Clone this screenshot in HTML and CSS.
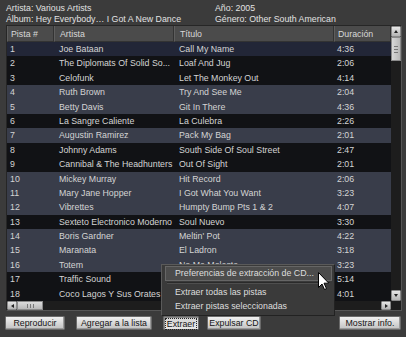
FILE: index.html
```html
<!DOCTYPE html>
<html lang="es">

<head>
    <meta charset="UTF-8">
    <title>Pistas del CD</title>
    <link rel="stylesheet" href="styles.css">
</head>

<body>
    <div class="window">
        <div class="info">
            <div>Artista: Various Artists</div>
            <div>Año: 2005</div>
            <div>Álbum: Hey Everybody… I Got A New Dance</div>
            <div>Género: Other South American</div>
        </div>

        <div class="list">
            <div class="table">
                <div class="row head">
                    <span>Pista #</span><span>Artista</span><span>Título</span><span>Duración</span>
                </div>
                <div class="row focus"><span>1</span><span>Joe Bataan</span><span>Call My Name</span><span>4:36</span></div>
                <div class="row"><span>2</span><span>The Diplomats Of Solid So...</span><span>Loaf And Jug</span><span>2:06</span></div>
                <div class="row"><span>3</span><span>Celofunk</span><span>Let The Monkey Out</span><span>4:14</span></div>
                <div class="row sel"><span>4</span><span>Ruth Brown</span><span>Try And See Me</span><span>2:04</span></div>
                <div class="row sel"><span>5</span><span>Betty Davis</span><span>Git In There</span><span>4:36</span></div>
                <div class="row"><span>6</span><span>La Sangre Caliente</span><span>La Culebra</span><span>2:26</span></div>
                <div class="row sel"><span>7</span><span>Augustin Ramirez</span><span>Pack My Bag</span><span>2:01</span></div>
                <div class="row"><span>8</span><span>Johnny Adams</span><span>South Side Of Soul Street</span><span>2:47</span></div>
                <div class="row"><span>9</span><span>Cannibal &amp; The Headhunters</span><span>Out Of Sight</span><span>2:01</span></div>
                <div class="row sel"><span>10</span><span>Mickey Murray</span><span>Hit Record</span><span>2:06</span></div>
                <div class="row sel"><span>11</span><span>Mary Jane Hopper</span><span>I Got What You Want</span><span>3:23</span></div>
                <div class="row sel"><span>12</span><span>Vibrettes</span><span>Humpty Bump Pts 1 &amp; 2</span><span>4:07</span></div>
                <div class="row"><span>13</span><span>Sexteto Electronico Moderno</span><span>Soul Nuevo</span><span>3:30</span></div>
                <div class="row sel"><span>14</span><span>Boris Gardner</span><span>Meltin' Pot</span><span>4:22</span></div>
                <div class="row sel"><span>15</span><span>Maranata</span><span>El Ladron</span><span>3:18</span></div>
                <div class="row sel"><span>16</span><span>Totem</span><span>No Me Moleste</span><span>3:23</span></div>
                <div class="row"><span>17</span><span>Traffic Sound</span><span>Yellow Sea</span><span>5:14</span></div>
                <div class="row"><span>18</span><span>Coco Lagos Y Sus Orates</span><span>Sin Rumbo</span><span>4:01</span></div>
            </div>

            <div class="vscroll">
                <div class="sbtn"><span class="tri up"></span></div>
                <div class="vthumb"><i></i><i></i><i></i></div>
                <div class="track"></div>
                <div class="sbtn"><span class="tri down"></span></div>
            </div>

            <div class="hscroll">
                <div class="sbtn"><span class="tri left"></span></div>
                <div class="hthumb"><i></i><i></i><i></i></div>
                <div class="track"></div>
                <div class="sbtn"><span class="tri right"></span></div>
            </div>
            <div class="corner"></div>
        </div>

        <div class="buttons">
            <button class="btn b-play">Reproducir</button>
            <button class="btn b-add">Agregar a la lista</button>
            <button class="btn b-rip pressed"><span>Extraer</span></button>
            <button class="btn b-eject">Expulsar CD</button>
            <button class="btn b-info">Mostrar info.</button>
        </div>

        <!-- menú de "Extraer" -->
        <div class="menu">
            <div class="menu-item hover">Preferencias de extracción de CD...</div>
            <div class="menu-sep"></div>
            <div class="menu-item">Extraer todas las pistas</div>
            <div class="menu-item">Extraer pistas seleccionadas</div>
        </div>

        <svg class="cursor" width="12" height="19" viewBox="0 0 12 19">
            <path d="M0.5 0.5 L0.5 15.5 L4 12 L6.5 17.5 L8.5 16.6 L6 11.2 L10.8 11.2 Z" fill="#fff" stroke="#000" stroke-width="1" stroke-linejoin="miter"/>
        </svg>
    </div>
</body>

</html>
```

FILE: styles.css
```css
html, body {
    margin: 0;
    padding: 0;
    background: #3b3b3b;
}

.window {
    position: relative;
    width: 406px;
    height: 337px;
    overflow: hidden;
    background: #3b3b3b;
    font-family: "Liberation Sans", Arial, sans-serif;
    font-size: 8.8px;
    color: #d4d4d4;
}

.info {
    display: grid;
    grid-template-columns: 209px 1fr;
    grid-auto-rows: 11px;
    padding: 3px 0 0 6px;
    height: 22px;
    line-height: 11px;
    color: #e2e2e2;
}

/* Lista de pistas */
.list {
    display: grid;
    grid-template-columns: 384px 10px;
    grid-template-rows: 275px 9px;
    width: 394px;
    margin-left: 6px;
    border: 1px solid #262626;
    border-right-color: #555;
    border-bottom-color: #555;
}

.table {
    background: #111215;
    overflow: hidden;
}

.row {
    display: grid;
    grid-template-columns: 47px 120px 160px 57px;
    height: 14.4px;
    line-height: 14.4px;
    white-space: nowrap;
}

.row span {
    padding-left: 3px;
    overflow: hidden;
}

.row span:nth-child(2),
.row span:nth-child(3) {
    padding-left: 5px;
}

.row.head {
    height: 16px;
    line-height: 16px;
    background: #4b4b4b;
    color: #d8d8d8;
}

.row.head span {
    border-left: 1px solid #5e5e5e;
    border-right: 1px solid #333;
    border-bottom: 1px solid #333;
}

.row.focus {
    background: #222637;
}

.row.sel {
    background: #393d4a;
}

/* Barras de desplazamiento */
.vscroll {
    display: flex;
    flex-direction: column;
    background: #1d1d1d;
}

.hscroll {
    display: flex;
    background: #1d1d1d;
}

.track {
    flex: 1;
}

.corner {
    background: #1d1d1d;
}

.sbtn {
    display: flex;
    align-items: center;
    justify-content: center;
    width: 10px;
    height: 10px;
    box-sizing: border-box;
    background: linear-gradient(#e6e6e6, #b4b4b4);
    border: 1px solid #8a8a8a;
    border-radius: 1px;
}

.vscroll .sbtn {
    height: 11px;
}

.hscroll .sbtn {
    height: 9px;
}

.tri {
    width: 0;
    height: 0;
    border: 2px solid transparent;
}

.tri.up {
    border-bottom: 3px solid #222;
    border-top-width: 0;
}

.tri.down {
    border-top: 3px solid #222;
    border-bottom-width: 0;
}

.tri.left {
    border-right: 3px solid #222;
    border-left-width: 0;
}

.tri.right {
    border-left: 3px solid #222;
    border-right-width: 0;
}

.vthumb {
    display: flex;
    flex-direction: column;
    align-items: center;
    justify-content: center;
    gap: 2px;
    height: 24px;
    box-sizing: border-box;
    background: linear-gradient(90deg, #d8d8d8, #b8b8b8);
    border: 1px solid #8a8a8a;
}

.vthumb i {
    display: block;
    width: 4px;
    height: 1px;
    background: #777;
}

.hthumb {
    display: flex;
    align-items: center;
    justify-content: center;
    gap: 2px;
    width: 26px;
    box-sizing: border-box;
    background: linear-gradient(#dcdcdc, #b8b8b8);
    border: 1px solid #8a8a8a;
}

.hthumb i {
    display: block;
    width: 1px;
    height: 4px;
    background: #777;
}

/* Botones */
.buttons {
    display: flex;
    align-items: center;
    padding: 5px 5px 0 5px;
}

.btn {
    height: 14px;
    padding: 0;
    margin: 0;
    font-family: inherit;
    font-size: 8.8px;
    line-height: 12px;
    color: #141414;
    background: linear-gradient(#f0f0f0, #c2c2c2);
    border: 1px solid #6a6a6a;
    border-radius: 1px;
    box-shadow: inset -1px -1px 0 #9a9a9a;
}

.b-play {
    width: 60px;
}

.b-add {
    width: 76px;
    margin-left: 11px;
}

.b-rip {
    width: 36px;
    margin-left: 11px;
}

.b-eject {
    width: 54px;
    margin-left: 8px;
}

.b-info {
    width: 62px;
    margin-left: auto;
    margin-right: 0;
}

.btn.pressed {
    padding: 1px;
    background: linear-gradient(#d4d4d4, #e8e8e8);
    box-shadow: inset 1px 1px 0 #8a8a8a;
}

.btn.pressed span {
    display: block;
    height: 10px;
    line-height: 10px;
    border: 1px dotted #222;
}

/* Menú emergente */
.menu {
    position: absolute;
    left: 161px;
    top: 264px;
    width: 174px;
    height: 52px;
    box-sizing: border-box;
    padding: 1px 2px 0 3px;
    background: #3a3a3a;
    border: 1px solid #5a5a5a;
    border-right-color: #222;
    border-bottom-color: #222;
    color: #dedede;
}

.menu-item {
    height: 14px;
    line-height: 14px;
    padding-left: 9px;
    border: 1px solid transparent;
    border-top: 0;
    border-bottom: 0;
    white-space: nowrap;
}

.menu-item.hover {
    height: 13px;
    line-height: 13px;
    background: #4c4c4c;
    border: 1px solid #666;
}

.menu-sep {
    height: 1px;
    margin: 1px 2px 1px 2px;
    background: #2a2a2a;
    border-bottom: 1px solid #4e4e4e;
}

.cursor {
    position: absolute;
    left: 318px;
    top: 272px;
}
```
